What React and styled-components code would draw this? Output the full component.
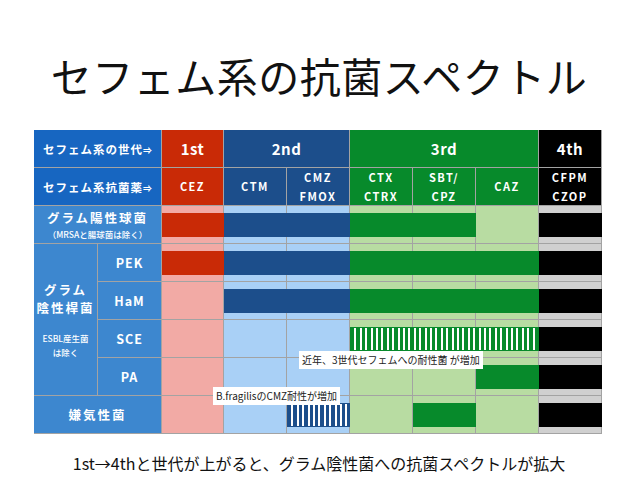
import React from 'react'
import styled, { createGlobalStyle, css } from 'styled-components'

const GlobalStyle = createGlobalStyle`
  body {
    margin: 0;
    background: #fff;
    font-family: "Noto Sans CJK JP", "Noto Sans", sans-serif;
  }
`

const colors = {
  red: '#c92a06',
  pink: '#f2aaa5',
  navy: '#1c4e8b',
  sky: '#a9d0f6',
  green: '#078a2b',
  mint: '#b8dca2',
  black: '#000',
  gray: '#d0d0d0',
  headBlue: '#1766c1',
  labelBlue: '#3d87cf',
  line: '#a3a3a3',
}

// light background per drug column (CEZ .. CFPM)
const columnShade = [
  colors.pink,
  colors.sky,
  colors.sky,
  colors.mint,
  colors.mint,
  colors.mint,
  colors.gray,
]

const rows = [
  {
    key: 'gp',
    bars: [
      { from: 0, span: 1, color: colors.red },
      { from: 1, span: 2, color: colors.navy },
      { from: 3, span: 2, color: colors.green },
      { from: 6, span: 1, color: colors.black },
    ],
  },
  {
    key: 'pek',
    sub: 'PEK',
    bars: [
      { from: 0, span: 1, color: colors.red },
      { from: 1, span: 2, color: colors.navy },
      { from: 3, span: 3, color: colors.green },
      { from: 6, span: 1, color: colors.black },
    ],
  },
  {
    key: 'ham',
    sub: 'HaM',
    bars: [
      { from: 1, span: 2, color: colors.navy },
      { from: 3, span: 3, color: colors.green },
      { from: 6, span: 1, color: colors.black },
    ],
  },
  {
    key: 'sce',
    sub: 'SCE',
    bars: [
      { from: 3, span: 3, color: colors.green, striped: true },
      { from: 6, span: 1, color: colors.black },
    ],
  },
  {
    key: 'pa',
    sub: 'PA',
    bars: [
      { from: 5, span: 1, color: colors.green },
      { from: 6, span: 1, color: colors.black },
    ],
  },
  {
    key: 'ana',
    bars: [
      { from: 2, span: 1, color: colors.navy, striped: true },
      { from: 4, span: 1, color: colors.green },
      { from: 6, span: 1, color: colors.black },
    ],
  },
]

const generations = [
  { label: '1st', col: 3, span: 1, color: colors.red },
  { label: '2nd', col: 4, span: 2, color: colors.navy },
  { label: '3rd', col: 6, span: 3, color: colors.green },
  { label: '4th', col: 9, span: 1, color: colors.black },
]

const drugs = [
  { name: ['CEZ'], color: colors.red },
  { name: ['CTM'], color: colors.navy },
  { name: ['CMZ', 'FMOX'], color: colors.navy },
  { name: ['CTX', 'CTRX'], color: colors.green },
  { name: ['SBT/', 'CPZ'], color: colors.green },
  { name: ['CAZ'], color: colors.green },
  { name: ['CFPM', 'CZOP'], color: colors.black },
]

const Page = styled.div`
  width: 638px;
  height: 479px;
  display: flex;
  flex-direction: column;
  align-items: center;
  overflow: hidden;
`

const Title = styled.h1`
  margin: 50px 0 0;
  font-size: 41px;
  line-height: 50px;
  font-weight: 400;
  color: #111;
  letter-spacing: 0.5px;
`

const TableWrap = styled.div`
  position: relative;
  align-self: flex-start;
  margin: 30px 0 0 34px;
`

const Grid = styled.div`
  display: grid;
  grid-template-columns: 64px 64px 62px repeat(6, 63px);
  grid-template-rows: repeat(8, 38px);
`

const Cell = styled.div`
  box-sizing: border-box;
  grid-column: ${p => p.$col} / span ${p => p.$colSpan || 1};
  grid-row: ${p => p.$row} / span ${p => p.$rowSpan || 1};
  background: ${p => p.$bg};
  border-right: 1px solid ${colors.line};
  border-bottom: 1px solid ${colors.line};
  color: #fff;
  font-weight: 700;
  display: flex;
  flex-direction: column;
  align-items: center;
  justify-content: center;
  text-align: center;
`

const GenText = styled.span`
  font-size: 15px;
  letter-spacing: 0.5px;
`

const HeadLabel = styled.span`
  font-size: 11.5px;
  letter-spacing: 1px;
`

const Arrow = styled.span`
  font-size: 9px;
  letter-spacing: 0;
`

const DrugText = styled.span`
  font-size: 11px;
  line-height: 19px;
  letter-spacing: 1.5px;
`

const GroupTitle = styled.span`
  font-size: 12.5px;
  line-height: 18px;
  letter-spacing: 2px;
`

const GroupNote = styled.span`
  font-size: 8.5px;
  line-height: 14px;
  font-weight: 500;
  margin-top: ${p => (p.$gap ? '14px' : '0')};
`

const SubLabel = styled.span`
  font-size: 12.5px;
  letter-spacing: 1px;
`

const Bar = styled.div`
  grid-column: ${p => p.$col} / span ${p => p.$span};
  grid-row: ${p => p.$row};
  align-self: center;
  height: 24px;
  z-index: 1;
  box-sizing: border-box;
  background: ${p => p.$color};
  ${p =>
    p.$striped &&
    css`
      border: 1px solid ${p.$color};
      background: repeating-linear-gradient(
        90deg,
        ${p.$color} 0 3.4px,
        #fff 3.4px 5.4px
      );
    `}
`

const Note = styled.div`
  position: absolute;
  left: ${p => p.$left}px;
  top: ${p => p.$top}px;
  z-index: 2;
  background: #fff;
  color: #222;
  font-size: 10px;
  line-height: 16px;
  padding: 1px 3px;
  white-space: nowrap;
`

const Footer = styled.p`
  margin: 19px 0 0;
  font-size: 16px;
  line-height: 20px;
  color: #111;
`

const App = () => (
  <Page>
    <GlobalStyle />
    <Title>セフェム系の抗菌スペクトル</Title>

    <TableWrap>
      <Grid>
        <Cell $col={1} $colSpan={2} $row={1} $bg={colors.headBlue}>
          <HeadLabel>
            セフェム系の世代<Arrow>⇒</Arrow>
          </HeadLabel>
        </Cell>
        {generations.map(g => (
          <Cell key={g.label} $col={g.col} $colSpan={g.span} $row={1} $bg={g.color}>
            <GenText>{g.label}</GenText>
          </Cell>
        ))}

        <Cell $col={1} $colSpan={2} $row={2} $bg={colors.headBlue}>
          <HeadLabel>
            セフェム系抗菌薬<Arrow>⇒</Arrow>
          </HeadLabel>
        </Cell>
        {drugs.map((d, i) => (
          <Cell key={d.name.join()} $col={i + 3} $row={2} $bg={d.color}>
            {d.name.map(n => (
              <DrugText key={n}>{n}</DrugText>
            ))}
          </Cell>
        ))}

        <Cell $col={1} $colSpan={2} $row={3} $bg={colors.labelBlue}>
          <GroupTitle>グラム陽性球菌</GroupTitle>
          <GroupNote>（MRSAと腸球菌は除く）</GroupNote>
        </Cell>

        <Cell $col={1} $row={4} $rowSpan={4} $bg={colors.labelBlue}>
          <GroupTitle>グラム</GroupTitle>
          <GroupTitle>陰性桿菌</GroupTitle>
          <GroupNote $gap>ESBL産生菌</GroupNote>
          <GroupNote>は除く</GroupNote>
        </Cell>

        <Cell $col={1} $colSpan={2} $row={8} $bg={colors.labelBlue}>
          <GroupTitle>嫌気性菌</GroupTitle>
        </Cell>

        {rows.map((r, ri) => (
          <React.Fragment key={r.key}>
            {r.sub && (
              <Cell $col={2} $row={ri + 3} $bg={colors.labelBlue}>
                <SubLabel>{r.sub}</SubLabel>
              </Cell>
            )}
            {columnShade.map((shade, ci) => (
              <Cell key={ci} $col={ci + 3} $row={ri + 3} $bg={shade} />
            ))}
            {r.bars.map(b => (
              <Bar
                key={b.from}
                $col={b.from + 3}
                $span={b.span}
                $row={ri + 3}
                $color={b.color}
                $striped={b.striped}
              />
            ))}
          </React.Fragment>
        ))}
      </Grid>

      <Note $left={265} $top={221}>
        近年、3世代セフェムへの耐性菌 が増加
      </Note>
      <Note $left={179} $top={257}>
        B.fragilisのCMZ耐性が増加
      </Note>
    </TableWrap>

    <Footer>1st→4thと世代が上がると、グラム陰性菌への抗菌スペクトルが拡大</Footer>
  </Page>
)

export default App
